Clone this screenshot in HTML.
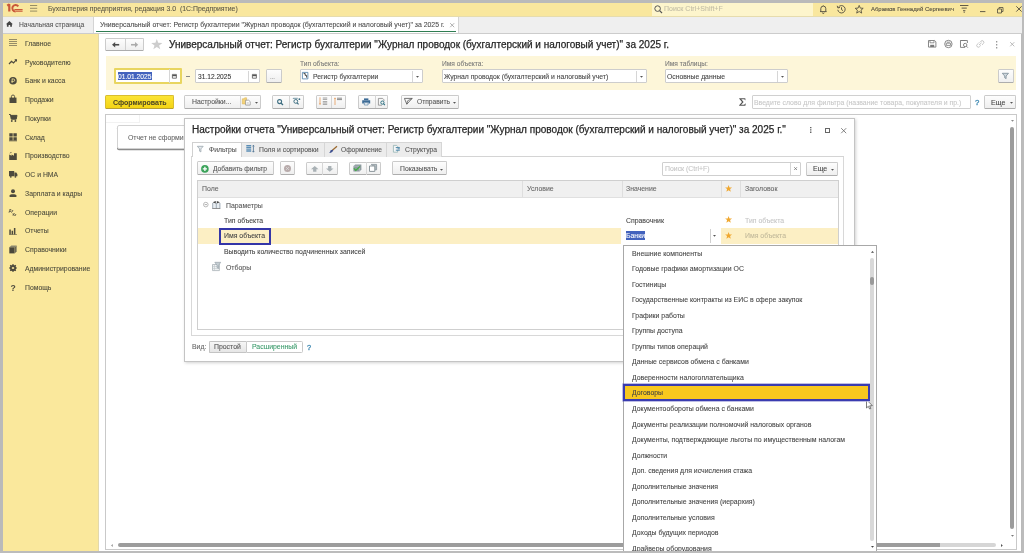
<!DOCTYPE html>
<html><head><meta charset="utf-8">
<style>
*{box-sizing:border-box;margin:0;padding:0}
html,body{-webkit-font-smoothing:antialiased;width:1024px;height:553px;overflow:hidden;background:#bababa;font-family:"Liberation Sans",sans-serif;color:#4a4a4a;position:relative}
.a{position:absolute}
.t{position:absolute;white-space:nowrap;will-change:transform;-webkit-text-stroke:0.08px currentColor}
svg{position:absolute;overflow:visible;will-change:transform}
</style></head><body>

<div class="a" style="left:3.00px;top:2.60px;width:1018.50px;height:13.40px;background:#f9e79e"></div>
<div class="a" style="left:3.00px;top:16.00px;width:1018.50px;height:0.60px;background:#e6dcae"></div>
<div class="a" style="left:3.00px;top:16.60px;width:1018.50px;height:16.40px;background:#efefef"></div>
<div class="a" style="left:3.00px;top:33.00px;width:1018.50px;height:0.80px;background:#cccccc"></div>
<div class="a" style="left:3.00px;top:33.80px;width:95.40px;height:516.80px;background:#fae89c"></div>
<div class="a" style="left:98.40px;top:33.80px;width:0.80px;height:516.80px;background:#e2d8ac"></div>
<div class="a" style="left:99.20px;top:33.80px;width:922.30px;height:516.80px;background:#fff"></div>
<svg style="left:6px;top:3px" width="18" height="11" viewBox="0 0 18 11"><path d="M1.2 2.7 L3.3 1.3 V8.6" stroke="#c9583a" stroke-width="2.2" fill="none" stroke-linejoin="bevel"/>
<path d="M12.3 3.3 A3.3 3.3 0 1 0 9.6 8.5" stroke="#c9583a" stroke-width="2" fill="none"/>
<path d="M8.4 6.5 H16.6 M9.6 8.1 H16.6" stroke="#c9583a" stroke-width="1.2" fill="none"/></svg>
<svg style="left:30px;top:5px" width="8" height="7" viewBox="0 0 8 7"><path d="M0 0.5H7.2M0 3.3H7.2M0 6.1H7.2" stroke="#8a835f" stroke-width="0.9"/></svg>
<div class="t" style="left:48.10px;top:1.80px;font-size:6.9px;line-height:14px;color:#5a5646;">Бухгалтерия предприятия, редакция 3.0&nbsp; (1С:Предприятие)</div>
<div class="a" style="left:651.70px;top:3.00px;width:161.20px;height:13.00px;background:#fdf5cc"></div>
<svg style="left:653.5px;top:5px" width="9" height="9" viewBox="0 0 9 9"><circle cx="3.6" cy="3.6" r="2.8" stroke="#555" stroke-width="1" fill="none"/><path d="M5.6 5.6 L8 8" stroke="#555" stroke-width="1.2"/></svg>
<div class="t" style="left:664.40px;top:2.00px;font-size:7.0px;line-height:14px;color:#c2bda5;">Поиск Ctrl+Shift+F</div>
<svg style="left:818.8px;top:5px" width="9" height="9" viewBox="0 0 9 9"><path d="M1 6.6 H7.6 M1.8 6.6 V3.6 A2.5 2.5 0 0 1 6.8 3.6 V6.6 M3.4 7.6 A0.9 0.9 0 0 0 5.2 7.6 M4.3 0.5 V1" stroke="#4f4b3e" stroke-width="0.9" fill="none"/></svg>
<svg style="left:837.2px;top:4.8px" width="9" height="9" viewBox="0 0 9 9"><path d="M1.4 2.2 A3.7 3.7 0 1 1 0.8 4.8" stroke="#4f4b3e" stroke-width="0.9" fill="none"/><path d="M0.2 0.8 L0.9 3 L3 2.4" stroke="#4f4b3e" stroke-width="0.9" fill="none"/><path d="M4.5 2.3 V4.6 L6 5.6" stroke="#4f4b3e" stroke-width="0.9" fill="none"/></svg>
<svg style="left:855px;top:4.6px" width="9" height="9" viewBox="0 0 9 9"><path d="M4.2 0.4 L5.3 3.1 L8.2 3.3 L6 5.2 L6.7 8.1 L4.2 6.5 L1.7 8.1 L2.4 5.2 L0.2 3.3 L3.1 3.1 Z" stroke="#4f4b3e" stroke-width="0.85" fill="none" stroke-linejoin="round"/></svg>
<div class="t" style="left:870.60px;top:1.70px;font-size:5.95px;line-height:14px;color:#4f4b3e;">Абрамов Геннадий Сергеевич</div>
<svg style="left:960px;top:5.2px" width="9" height="8" viewBox="0 0 9 8"><path d="M0 0.5H8.4M1.6 3.1H6.8M3 5.7H5.4" stroke="#4f4b3e" stroke-width="0.9"/><circle cx="4.2" cy="7.2" r="0.6" fill="#4f4b3e"/></svg>
<svg style="left:979.7px;top:10.5px" width="6" height="2" viewBox="0 0 6 2"><path d="M0 0.6H5.4" stroke="#4f4b3e" stroke-width="0.9"/></svg>
<svg style="left:997px;top:6.5px" width="7" height="7" viewBox="0 0 7 7"><path d="M0.5 2 H4.5 V6 H0.5 Z M2 2 V0.5 H6 V4.5 H4.5" stroke="#4f4b3e" stroke-width="0.8" fill="none"/></svg>
<svg style="left:1015.8px;top:6px" width="7" height="7" viewBox="0 0 7 7"><path d="M0.3 0.3 L5.6 5.6 M5.6 0.3 L0.3 5.6" stroke="#4f4b3e" stroke-width="0.9"/></svg>
<svg style="left:5.9px;top:21px" width="7" height="6" viewBox="0 0 7 6"><path d="M3.4 0 L6.9 3.2 H5.9 V5.7 H4.2 V3.9 H2.6 V5.7 H0.9 V3.2 H-0.1 Z" fill="#444"/></svg>
<div class="t" style="left:19.20px;top:18.10px;font-size:6.75px;line-height:14px;color:#555;">Начальная страница</div>
<div class="a" style="left:93.00px;top:16.60px;width:0.60px;height:16.40px;background:#d4d4d4"></div>
<div class="a" style="left:93.60px;top:16.60px;width:364.40px;height:16.40px;background:#fff"></div>
<div class="a" style="left:458.00px;top:16.60px;width:0.60px;height:16.40px;background:#d4d4d4"></div>
<div class="a" style="left:96.00px;top:31.00px;width:360.00px;height:1.20px;background:#2f7d52"></div>
<div class="t" style="left:99.60px;top:18.10px;font-size:6.9px;line-height:14px;color:#4a4a4a;">Универсальный отчет: Регистр бухгалтерии "Журнал проводок (бухгалтерский и налоговый учет)" за 2025 г.</div>
<svg style="left:449.5px;top:23px" width="4.5" height="4.5" viewBox="0 0 4.5 4.5"><path d="M0.2 0.2 L4.2 4.2 M4.2 0.2 L0.2 4.2" stroke="#9a9a9a" stroke-width="0.8"/></svg>
<div class="t" style="left:24.80px;top:36.90px;font-size:6.85px;line-height:14px;color:#4b4a3c;">Главное</div>
<svg style="left:9px;top:39.199999999999996px" width="8" height="8" viewBox="0 0 8 8"><path d="M0 0.5H8M0 2.5H8M0 4.5H8M0 6.5H8" stroke="#6a6650" stroke-width="0.7"/></svg>
<div class="t" style="left:24.80px;top:55.65px;font-size:6.85px;line-height:14px;color:#4b4a3c;">Руководителю</div>
<svg style="left:9px;top:57.949999999999996px" width="8" height="8" viewBox="0 0 8 8"><path d="M0 6 L2.5 3.3 L4.5 5 L7.3 1.8" stroke="#4d4a3d" stroke-width="1.2" fill="none"/><path d="M5.3 1.2 H8 V3.9 Z" fill="#4d4a3d"/></svg>
<div class="t" style="left:24.80px;top:74.40px;font-size:6.85px;line-height:14px;color:#4b4a3c;">Банк и касса</div>
<svg style="left:9px;top:76.7px" width="8" height="8" viewBox="0 0 8 8"><circle cx="4" cy="3.8" r="3.8" fill="#4d4a3d"/><path d="M3.1 1.6 V6 M3.1 2 H4.5 A1.2 1.2 0 0 1 4.5 4.4 H2.4" stroke="#fae89c" stroke-width="0.8" fill="none"/></svg>
<div class="t" style="left:24.80px;top:93.15px;font-size:6.85px;line-height:14px;color:#4b4a3c;">Продажи</div>
<svg style="left:9px;top:95.45px" width="8" height="8" viewBox="0 0 8 8"><path d="M0.5 2.6 H7.5 V8 H0.5 Z" fill="#4d4a3d"/><path d="M2.4 3 V1.6 A1.6 1.6 0 0 1 5.6 1.6 V3" stroke="#4d4a3d" stroke-width="0.9" fill="none"/></svg>
<div class="t" style="left:24.80px;top:111.90px;font-size:6.85px;line-height:14px;color:#4b4a3c;">Покупки</div>
<svg style="left:9px;top:114.2px" width="8" height="8" viewBox="0 0 8 8"><path d="M0 0.5 H1.4 L2.3 5.2 H7.2 L8 1.4 H1.7" stroke="#4d4a3d" stroke-width="1" fill="#4d4a3d"/><circle cx="2.8" cy="7" r="0.9" fill="#4d4a3d"/><circle cx="6.4" cy="7" r="0.9" fill="#4d4a3d"/></svg>
<div class="t" style="left:24.80px;top:130.65px;font-size:6.85px;line-height:14px;color:#4b4a3c;">Склад</div>
<svg style="left:9px;top:132.95000000000002px" width="8" height="8" viewBox="0 0 8 8"><path d="M0.3 0.3 H3.7 V3.5 H0.3Z M4.4 0.3 H7.8 V3.5 H4.4Z M0.3 4.2 H3.7 V7.2 H0.3Z M4.4 4.2 H7.8 V7.2 H4.4Z M0 7.6 H8 V8.2 H0Z" fill="#4d4a3d"/></svg>
<div class="t" style="left:24.80px;top:149.40px;font-size:6.85px;line-height:14px;color:#4b4a3c;">Производство</div>
<svg style="left:9px;top:151.70000000000002px" width="8" height="8" viewBox="0 0 8 8"><path d="M0.2 8 V2.4 L2.6 3.8 V2.4 L5 3.8 V1.2 H7.8 V8 Z" fill="#4d4a3d"/><path d="M1 1.4 A1 1 0 0 1 2.6 0.6" stroke="#4d4a3d" stroke-width="0.7" fill="none"/></svg>
<div class="t" style="left:24.80px;top:168.15px;font-size:6.85px;line-height:14px;color:#4b4a3c;">ОС и НМА</div>
<svg style="left:9px;top:170.45000000000002px" width="8" height="8" viewBox="0 0 8 8"><path d="M0 1 H5.2 V6.2 H0Z M5.5 2.6 H7.3 L8.4 4.2 V6.2 H5.5Z" fill="#4d4a3d"/><circle cx="1.8" cy="6.8" r="0.9" fill="#4d4a3d"/><circle cx="6.4" cy="6.8" r="0.9" fill="#4d4a3d"/></svg>
<div class="t" style="left:24.80px;top:186.90px;font-size:6.85px;line-height:14px;color:#4b4a3c;">Зарплата и кадры</div>
<svg style="left:9px;top:189.20000000000002px" width="8" height="8" viewBox="0 0 8 8"><circle cx="4" cy="2.2" r="2" fill="#4d4a3d"/><path d="M0.6 8 V6.4 C0.6 4.8 7.4 4.8 7.4 6.4 V8 Z" fill="#4d4a3d"/></svg>
<div class="t" style="left:24.80px;top:205.65px;font-size:6.85px;line-height:14px;color:#4b4a3c;">Операции</div>
<svg style="left:9px;top:207.95000000000002px" width="8" height="8" viewBox="0 0 8 8"><text x="-0.2" y="3.6" font-size="4" font-weight="bold" fill="#4d4a3d" font-family="Liberation Sans">Дт</text><text x="3.4" y="7.9" font-size="4" font-weight="bold" fill="#4d4a3d" font-family="Liberation Sans">Кт</text></svg>
<div class="t" style="left:24.80px;top:224.40px;font-size:6.85px;line-height:14px;color:#4b4a3c;">Отчеты</div>
<svg style="left:9px;top:226.70000000000002px" width="8" height="8" viewBox="0 0 8 8"><path d="M0.3 2.5 H1.8 V7.2 H0.3Z M2.6 3.8 H4.1 V7.2 H2.6Z M4.9 1 H6.4 V7.2 H4.9Z M0 7.4 H8 V8 H0Z" fill="#4d4a3d"/></svg>
<div class="t" style="left:24.80px;top:243.15px;font-size:6.85px;line-height:14px;color:#4b4a3c;">Справочники</div>
<svg style="left:9px;top:245.45000000000002px" width="8" height="8" viewBox="0 0 8 8"><path d="M0.3 2.2 H5.6 V8.4 H0.3Z" fill="#4a473b"/><path d="M0.3 2.2 L2.3 0.4 H7.6 L5.6 2.2Z" fill="#8a866f"/><path d="M5.6 2.2 L7.6 0.4 V6.6 L5.6 8.4Z" fill="#6c6956"/></svg>
<div class="t" style="left:24.80px;top:261.90px;font-size:6.85px;line-height:14px;color:#4b4a3c;">Администрирование</div>
<svg style="left:9px;top:264.2px" width="8" height="8" viewBox="0 0 8 8"><circle cx="4" cy="4" r="2.3" stroke="#4d4a3d" stroke-width="1.6" fill="none"/><path d="M4 0V8M0 4H8M1.2 1.2L6.8 6.8M6.8 1.2L1.2 6.8" stroke="#4d4a3d" stroke-width="1.2"/><circle cx="4" cy="4" r="1.1" fill="#fae89c"/></svg>
<div class="t" style="left:24.80px;top:280.65px;font-size:6.85px;line-height:14px;color:#4b4a3c;">Помощь</div>
<svg style="left:9px;top:282.95px" width="8" height="8" viewBox="0 0 8 8"><text x="1.4" y="7.8" font-size="8.6" font-weight="bold" fill="#4d4a3d" font-family="Liberation Sans">?</text></svg>
<div class="a" style="left:105.40px;top:38.10px;width:39.00px;height:12.50px;background:linear-gradient(#fdfdfd,#efefef);border:1px solid #cbcbcb;border-bottom-color:#adadad;border-radius:1.5px;"></div>
<div class="a" style="left:125.00px;top:38.60px;width:0.80px;height:11.60px;background:#d0d0d0"></div>
<svg style="left:111.9px;top:41.8px" width="7.5" height="5.5" viewBox="0 0 7.5 5.5"><path d="M0 2.75 L3.2 0 V5.5Z" fill="#4a4a4a"/><path d="M2.5 2.75 H7.2" stroke="#4a4a4a" stroke-width="1.6"/></svg>
<svg style="left:131px;top:41.8px" width="7.5" height="5.5" viewBox="0 0 7.5 5.5"><path d="M7.2 2.75 L4 0 V5.5Z" fill="#ababab"/><path d="M0 2.75 H4.7" stroke="#ababab" stroke-width="1.6"/></svg>
<svg style="left:151.2px;top:39.4px" width="11.6" height="10.5" viewBox="0 0 11.6 10.5"><path d="M5.8 0 L7.2 3.8 L11.4 3.9 L8.1 6.4 L9.3 10.3 L5.8 8 L2.3 10.3 L3.5 6.4 L0.2 3.9 L4.4 3.8Z" fill="#cdcdcd"/></svg>
<div class="t" style="left:168.75px;top:38.00px;font-size:10.0px;line-height:14px;color:#262626;-webkit-text-stroke:0.25px #262626">Универсальный отчет: Регистр бухгалтерии "Журнал проводок (бухгалтерский и налоговый учет)" за 2025 г.</div>
<svg style="left:928px;top:40.3px" width="8.4" height="7.6" viewBox="0 0 8.4 7.6"><path d="M0.5 0.5 H6.6 L7.9 1.8 V7.1 H0.5Z" stroke="#7a7a7a" stroke-width="0.9" fill="none"/><path d="M2 0.6 V2.8 H6 V0.6" stroke="#7a7a7a" stroke-width="0.8" fill="none"/><path d="M2.2 4.8 H6.2 V7H2.2Z" fill="#7a7a7a"/></svg>
<svg style="left:943.9px;top:40px" width="8.8" height="8" viewBox="0 0 8.8 8"><circle cx="4.4" cy="4" r="3.7" stroke="#7a7a7a" stroke-width="0.9" fill="none"/><path d="M2.3 3.2 H6.5 V5.4 H2.3Z M3 2.2 H5.8" stroke="#7a7a7a" stroke-width="0.8" fill="none"/></svg>
<svg style="left:960px;top:40px" width="8.2" height="8" viewBox="0 0 8.2 8"><path d="M5.5 0.5 H0.5 V7.4 H5" stroke="#7a7a7a" stroke-width="0.9" fill="none"/><path d="M0.5 0.5 H7.4 V3" stroke="#7a7a7a" stroke-width="0.9" fill="none"/><circle cx="5.2" cy="5" r="1.7" stroke="#7a7a7a" stroke-width="0.9" fill="none"/><path d="M6.4 6.2 L7.8 7.6" stroke="#7a7a7a" stroke-width="1"/></svg>
<svg style="left:976.2px;top:40.2px" width="8.8" height="8" viewBox="0 0 8.8 8"><path d="M3.6 2.6 L5 1.2 A1.6 1.6 0 0 1 7.4 3.5 L6 4.9 M4.8 5.4 L3.5 6.7 A1.6 1.6 0 0 1 1.2 4.4 L2.6 3 M3 5 L5.6 2.8" stroke="#bdbdbd" stroke-width="0.9" fill="none"/></svg>
<svg style="left:996px;top:40.5px" width="1.5" height="7.5" viewBox="0 0 1.5 7.5"><path d="M0.7 0V1.4M0.7 3V4.4M0.7 6V7.4" stroke="#888" stroke-width="1.1"/></svg>
<svg style="left:1010.3px;top:42px" width="4.5" height="4.5" viewBox="0 0 4.5 4.5"><path d="M0.2 0.2L4.3 4.3M4.3 0.2L0.2 4.3" stroke="#aaa" stroke-width="0.8"/></svg>
<div class="a" style="left:105.50px;top:56.00px;width:910.50px;height:33.80px;background:#fdf6d9"></div>
<div class="a" style="left:113.70px;top:67.80px;width:68.30px;height:16.60px;background:#fff;border:2px solid #e8d560;border-radius:1px"></div>
<div class="a" style="left:117.60px;top:72.00px;width:34.70px;height:7.60px;background:#4262bd"></div>
<div class="t" style="left:117.80px;top:69.70px;font-size:6.7px;line-height:14px;color:#fff;">01.01.2025</div>
<div class="a" style="left:169.30px;top:69.40px;width:0.80px;height:13.40px;background:#d6d6d6"></div>
<svg style="left:172.2px;top:74px" width="5" height="4.6" viewBox="0 0 5 4.6"><path d="M0.4 0.4H4.4V4.2H0.4Z" stroke="#555" stroke-width="0.8" fill="none"/><path d="M0.4 1.6H4.4" stroke="#555" stroke-width="1.2"/></svg>
<div class="a" style="left:186.00px;top:76.00px;width:4.00px;height:1.00px;background:#888"></div>
<div class="a" style="left:195.30px;top:69.20px;width:65.20px;height:14.00px;background:#fff;border:1px solid #cdcdcd;border-radius:1px"></div>
<div class="t" style="left:197.70px;top:69.70px;font-size:6.63px;line-height:14px;color:#333;">31.12.2025</div>
<div class="a" style="left:248.40px;top:70.50px;width:0.80px;height:11.30px;background:#d6d6d6"></div>
<svg style="left:252px;top:74px" width="5" height="4.6" viewBox="0 0 5 4.6"><path d="M0.4 0.4H4.4V4.2H0.4Z" stroke="#555" stroke-width="0.8" fill="none"/><path d="M0.4 1.6H4.4" stroke="#555" stroke-width="1.2"/></svg>
<div class="a" style="left:266.00px;top:69.20px;width:15.60px;height:14.00px;background:linear-gradient(#fdfdfd,#efefef);border:1px solid #cbcbcb;border-bottom-color:#adadad;border-radius:1.5px;"></div>
<div class="t" style="left:269.80px;top:69.70px;font-size:6.0px;line-height:14px;color:#888;">...</div>
<div class="t" style="left:300.30px;top:56.80px;font-size:6.64px;line-height:14px;color:#777;">Тип объекта:</div>
<div class="a" style="left:300.30px;top:69.20px;width:123.20px;height:14.00px;background:#fff;border:1px solid #cdcdcd;border-radius:1px"></div>
<svg style="left:302.3px;top:72.3px" width="6.3" height="7.3" viewBox="0 0 6.3 7.3"><path d="M0.4 0.4H5.9V6.9H0.4Z" stroke="#4b7ea8" stroke-width="0.8" fill="#fff"/><path d="M1.6 1.6 H3.2 V3.4 H4.6 V5.6" stroke="#333" stroke-width="0.9" fill="none"/></svg>
<div class="t" style="left:312.60px;top:69.80px;font-size:6.81px;line-height:14px;color:#444;">Регистр бухгалтерии</div>
<div class="a" style="left:412.40px;top:70.50px;width:0.80px;height:11.30px;background:#d6d6d6"></div>
<svg style="left:416.3px;top:75.5px" width="3" height="2" viewBox="0 0 3 2"><path d="M0 0H3L1.5 1.8Z" fill="#555"/></svg>
<div class="t" style="left:442.30px;top:56.80px;font-size:6.64px;line-height:14px;color:#777;">Имя объекта:</div>
<div class="a" style="left:442.20px;top:69.20px;width:204.60px;height:14.00px;background:#fff;border:1px solid #cdcdcd;border-radius:1px"></div>
<div class="t" style="left:444.30px;top:69.80px;font-size:6.81px;line-height:14px;color:#444;">Журнал проводок (бухгалтерский и налоговый учет)</div>
<div class="a" style="left:635.50px;top:70.50px;width:0.80px;height:11.30px;background:#d6d6d6"></div>
<svg style="left:639.5px;top:75.5px" width="3" height="2" viewBox="0 0 3 2"><path d="M0 0H3L1.5 1.8Z" fill="#555"/></svg>
<div class="t" style="left:664.50px;top:56.80px;font-size:6.64px;line-height:14px;color:#777;">Имя таблицы:</div>
<div class="a" style="left:664.50px;top:69.20px;width:123.80px;height:14.00px;background:#fff;border:1px solid #cdcdcd;border-radius:1px"></div>
<div class="t" style="left:666.60px;top:69.80px;font-size:6.81px;line-height:14px;color:#444;">Основные данные</div>
<div class="a" style="left:777.00px;top:70.50px;width:0.80px;height:11.30px;background:#d6d6d6"></div>
<svg style="left:781px;top:75.5px" width="3" height="2" viewBox="0 0 3 2"><path d="M0 0H3L1.5 1.8Z" fill="#555"/></svg>
<div class="a" style="left:998.00px;top:69.20px;width:15.50px;height:14.00px;background:linear-gradient(#fdfdfd,#efefef);border:1px solid #cbcbcb;border-bottom-color:#adadad;border-radius:1.5px;"></div>
<svg style="left:1002.3px;top:72.8px" width="7" height="6" viewBox="0 0 7 6"><path d="M0.3 0.3 H6.5 L4.1 3 V5.6 L2.7 4.8 V3 Z" stroke="#7a8a95" stroke-width="0.8" fill="#cfd8de"/></svg>
<div class="a" style="left:105.40px;top:94.70px;width:68.30px;height:14.05px;background:linear-gradient(#fbe435,#f4d414);border:1px solid #d8bd30;border-bottom-color:#b9a030;border-radius:1.5px"></div>
<div class="t" style="left:112.70px;top:95.90px;font-size:7.05px;line-height:14px;color:#4a4424;font-weight:bold;-webkit-text-stroke:0">Сформировать</div>
<div class="a" style="left:184.40px;top:94.70px;width:76.60px;height:13.90px;background:linear-gradient(#fdfdfd,#efefef);border:1px solid #cbcbcb;border-bottom-color:#adadad;border-radius:1.5px;"></div>
<div class="t" style="left:191.80px;top:95.10px;font-size:6.88px;line-height:14px;color:#555;">Настройки...</div>
<div class="a" style="left:239.50px;top:95.30px;width:0.80px;height:12.50px;background:#d4d4d4"></div>
<svg style="left:242.2px;top:97.4px" width="8.8" height="8.4" viewBox="0 0 8.8 8.4"><path d="M0.3 1.8 H1.8 L2.6 0.8 H4.6 V7 H0.3Z" fill="#f3d27a" stroke="#d8b04a" stroke-width="0.5"/><path d="M3.6 3.2 H6.6 L8.2 4.6 V8.1 H3.6Z" fill="#fff" stroke="#8a8a8a" stroke-width="0.7"/><path d="M4.8 5.6H6.8M4.8 6.8H6.8" stroke="#aaa" stroke-width="0.5"/></svg>
<svg style="left:254.8px;top:101.5px" width="3" height="2" viewBox="0 0 3 2"><path d="M0 0H3L1.5 1.8Z" fill="#555"/></svg>
<div class="a" style="left:272.30px;top:94.70px;width:31.30px;height:13.90px;background:linear-gradient(#fdfdfd,#efefef);border:1px solid #cbcbcb;border-bottom-color:#adadad;border-radius:1.5px;"></div>
<div class="a" style="left:288.50px;top:95.30px;width:0.80px;height:12.50px;background:#d4d4d4"></div>
<svg style="left:277px;top:98.6px" width="6.6" height="6.2" viewBox="0 0 6.6 6.2"><circle cx="2.6" cy="2.6" r="2" stroke="#3f6f82" stroke-width="1.1" fill="none"/><path d="M4 4 L6 6" stroke="#3f6f82" stroke-width="1.3"/></svg>
<svg style="left:293px;top:98.3px" width="7.2" height="6.8" viewBox="0 0 7.2 6.8"><path d="M0.3 1 V0.3 H4.8" stroke="#3f6f82" stroke-width="0.7" fill="none"/><circle cx="2.8" cy="3.4" r="1.9" stroke="#3f6f82" stroke-width="1" fill="none"/><path d="M4.1 4.8 L5.6 6.4" stroke="#3f6f82" stroke-width="1.2"/><circle cx="6.4" cy="1.2" r="0.9" fill="#3f6f82"/></svg>
<div class="a" style="left:315.50px;top:94.70px;width:30.80px;height:13.90px;background:linear-gradient(#fdfdfd,#efefef);border:1px solid #cbcbcb;border-bottom-color:#adadad;border-radius:1.5px;"></div>
<div class="a" style="left:331.25px;top:95.30px;width:0.80px;height:12.50px;background:#d4d4d4"></div>
<svg style="left:318.6px;top:97.2px" width="9" height="8.4" viewBox="0 0 9 8.4"><path d="M1 0.3 V7.5" stroke="#e6a46a" stroke-width="0.9"/><path d="M0 6.3 L1 8 L2 6.3Z" fill="#e6a46a"/><path d="M3.8 1H8.2M3.8 2.4H8.2M3.8 4.6H8.2M3.8 6H8.2M3.8 7.4H8.2" stroke="#9a9a9a" stroke-width="0.9"/></svg>
<svg style="left:334.2px;top:97.2px" width="9" height="8.4" viewBox="0 0 9 8.4"><path d="M1 1.2 V8" stroke="#e6a46a" stroke-width="0.9"/><path d="M0 2 L1 0.3 L2 2Z" fill="#e6a46a"/><path d="M3 1.2H8M3 2.6H8" stroke="#8a8a8a" stroke-width="1"/></svg>
<div class="a" style="left:358.40px;top:94.70px;width:30.10px;height:13.90px;background:linear-gradient(#fdfdfd,#efefef);border:1px solid #cbcbcb;border-bottom-color:#adadad;border-radius:1.5px;"></div>
<div class="a" style="left:374.50px;top:95.30px;width:0.80px;height:12.50px;background:#d4d4d4"></div>
<svg style="left:362px;top:98px" width="8.4" height="7.2" viewBox="0 0 8.4 7.2"><path d="M2 0.4 H6.4 V2 H2Z" fill="#3c6b96"/><path d="M0.2 2.3 H8.2 V5.6 H6.6 V4.4 H1.8 V5.6 H0.2Z" fill="#3c6b96"/><path d="M2.3 4.8 H6.1 V7 H2.3Z" fill="#fff" stroke="#3c6b96" stroke-width="0.6"/></svg>
<svg style="left:378px;top:97.8px" width="7.4" height="7.6" viewBox="0 0 7.4 7.6"><path d="M4.6 0.4 H0.4 V7.2 H4" stroke="#777" stroke-width="0.7" fill="#f6f6f6"/><path d="M4.6 0.4 L6 1.8 V3" stroke="#777" stroke-width="0.7" fill="none"/><circle cx="4.4" cy="4.6" r="1.6" stroke="#2d6e80" stroke-width="1" fill="none"/><path d="M5.5 5.7 L6.9 7.1" stroke="#2d6e80" stroke-width="1.1"/></svg>
<div class="a" style="left:400.50px;top:94.70px;width:58.90px;height:13.90px;background:linear-gradient(#fdfdfd,#efefef);border:1px solid #cbcbcb;border-bottom-color:#adadad;border-radius:1.5px;"></div>
<svg style="left:404.2px;top:98.2px" width="8.6" height="6.6" viewBox="0 0 8.6 6.6"><path d="M0.4 0.4 H8.2 L2.8 6.2Z" stroke="#555" stroke-width="0.8" fill="none" stroke-linejoin="round"/><path d="M2.8 6.2 L3.6 2.8 L8.2 0.4" stroke="#555" stroke-width="0.7" fill="none"/></svg>
<div class="t" style="left:416.90px;top:95.20px;font-size:6.65px;line-height:14px;color:#555;">Отправить</div>
<svg style="left:452.8px;top:101.5px" width="3" height="2" viewBox="0 0 3 2"><path d="M0 0H3L1.5 1.8Z" fill="#555"/></svg>
<svg style="left:738.6px;top:98.1px" width="7" height="7.8" viewBox="0 0 7 7.8"><path d="M0.2 0.2 H6.3 L6.5 2.2 H6 C5.8 1.4 5.4 1.2 4.6 1.2 H2.3 L4.6 3.9 L2.1 6.7 H4.8 C5.6 6.7 6 6.4 6.3 5.6 H6.8 L6.4 7.7 H0.1 V7.2 L3 3.9 L0.2 0.7Z" fill="#555"/></svg>
<div class="a" style="left:752.00px;top:95.40px;width:218.50px;height:13.20px;background:#fff;border:1px solid #d0d0d0;border-radius:1px"></div>
<div class="t" style="left:753.80px;top:95.50px;font-size:6.9px;line-height:14px;color:#c6c6c6;">Введите слово для фильтра (название товара, покупателя и пр.)</div>
<div class="t" style="left:975.30px;top:95.90px;font-size:7.8px;line-height:14px;color:#3a86b0;-webkit-text-stroke:0.3px #3a86b0">?</div>
<div class="a" style="left:984.00px;top:95.30px;width:32.40px;height:13.30px;background:linear-gradient(#fdfdfd,#efefef);border:1px solid #cbcbcb;border-bottom-color:#adadad;border-radius:1.5px;"></div>
<div class="t" style="left:991.00px;top:96.10px;font-size:7.1px;line-height:14px;color:#444;">Еще</div>
<svg style="left:1009.8px;top:101.5px" width="3" height="2" viewBox="0 0 3 2"><path d="M0 0H3L1.5 1.8Z" fill="#555"/></svg>
<div class="a" style="left:105.20px;top:114.30px;width:911.80px;height:435.70px;background:#fff;border:1px solid #c9c9c9"></div>
<div class="a" style="left:106.20px;top:115.30px;width:34.20px;height:8.00px;border-right:1px solid #f2f2f2;border-bottom:1px solid #f2f2f2"></div>
<div class="a" style="left:116.70px;top:125.20px;width:143.30px;height:24.00px;background:#fff;border:1px solid #d2d2d2;border-radius:2px;box-shadow:0 1.2px 0 #8c8c8c"></div>
<div class="t" style="left:127.70px;top:131.10px;font-size:6.9px;line-height:14px;color:#666;">Отчет не сформирован</div>
<svg style="left:1010.8px;top:119.7px" width="3" height="2" viewBox="0 0 3 2"><path d="M0 0H3L1.5 1.8Z" fill="#888"/></svg>
<div class="a" style="left:1010.20px;top:126.70px;width:4.00px;height:402.00px;background:#9c9c9c;border-radius:2px"></div>
<svg style="left:1010.8px;top:534.7px" width="3" height="2" viewBox="0 0 3 2"><path d="M0 0H3L1.5 1.8Z" fill="#777"/></svg>
<svg style="left:110.6px;top:543.8px" width="2" height="3" viewBox="0 0 2 3"><path d="M1.8 0V3L0 1.5Z" fill="#999"/></svg>
<div class="a" style="left:118.10px;top:543.30px;width:827.90px;height:4.10px;background:#9c9c9c;border-radius:2px"></div>
<div class="a" style="left:940.00px;top:543.30px;width:56.00px;height:4.10px;background:#d6d6d6;border-radius:0 2px 2px 0"></div>
<svg style="left:1001.3px;top:543.8px" width="2" height="3" viewBox="0 0 2 3"><path d="M0 0V3L1.8 1.5Z" fill="#555"/></svg>
<div class="a" style="left:184.30px;top:118.10px;width:670.40px;height:243.50px;box-shadow:1px 1px 3px rgba(0,0,0,0.18)"></div>
<div class="a" style="left:184.30px;top:118.10px;width:670.40px;height:243.50px;background:#fff;border:1px solid #c4c4c4"></div>
<div class="t" style="left:192.10px;top:123.40px;font-size:10.04px;line-height:14px;color:#262626;-webkit-text-stroke:0.25px #262626">Настройки отчета "Универсальный отчет: Регистр бухгалтерии "Журнал проводок (бухгалтерский и налоговый учет)" за 2025 г."</div>
<svg style="left:810px;top:127.4px" width="1.5" height="6" viewBox="0 0 1.5 6"><path d="M0.75 0V1.3M0.75 2.3V3.6M0.75 4.6V5.9" stroke="#555" stroke-width="1.3"/></svg>
<div class="a" style="left:825.00px;top:128.30px;width:5.40px;height:4.50px;border:0.9px solid #666"></div>
<svg style="left:841px;top:127.8px" width="5.4" height="5.4" viewBox="0 0 5.4 5.4"><path d="M0.2 0.2L5.2 5.2M5.2 0.2L0.2 5.2" stroke="#666" stroke-width="0.8"/></svg>
<div class="a" style="left:191.30px;top:156.40px;width:652.90px;height:179.80px;border:1px solid #d8d8d8;border-top-color:#d0d0d0"></div>
<div class="a" style="left:241.40px;top:142.40px;width:83.20px;height:14.20px;background:#ececec;border:1px solid #d6d6d6;border-bottom:none"></div>
<div class="a" style="left:324.60px;top:142.40px;width:62.70px;height:14.20px;background:#ececec;border:1px solid #d6d6d6;border-bottom:none;border-left:none"></div>
<div class="a" style="left:387.30px;top:142.40px;width:55.20px;height:14.20px;background:#ececec;border:1px solid #d6d6d6;border-bottom:none;border-left:none"></div>
<div class="a" style="left:191.60px;top:142.40px;width:50.20px;height:15.00px;background:#fff;border:1px solid #d0d0d0;border-bottom:none"></div>
<svg style="left:197.3px;top:146.3px" width="6.5" height="6.2" viewBox="0 0 6.5 6.2"><path d="M0.3 0.3 H6.2 L3.9 2.9 V5.9 L2.6 5.2 V2.9Z" stroke="#9aa6ad" stroke-width="0.8" fill="#e6ebee"/></svg>
<div class="t" style="left:209.00px;top:143.00px;font-size:6.8px;line-height:14px;color:#555;">Фильтры</div>
<svg style="left:246.3px;top:145.3px" width="8.8" height="7.4" viewBox="0 0 8.8 7.4"><path d="M0.3 0.6H5.2M0.3 2.4H5.2M0.3 4.2H5.2M0.3 6H5.2" stroke="#5b8db5" stroke-width="1.3"/><path d="M7.4 0.3V7.1" stroke="#4a6f8f" stroke-width="0.8"/><path d="M6.5 1.4L7.4 0.2L8.3 1.4M6.5 6L7.4 7.2L8.3 6" stroke="#4a6f8f" stroke-width="0.7" fill="none"/></svg>
<div class="t" style="left:259.00px;top:142.80px;font-size:6.8px;line-height:14px;color:#555;">Поля и сортировки</div>
<svg style="left:328.9px;top:145.6px" width="8.2" height="7" viewBox="0 0 8.2 7"><path d="M8 0.2 L3.4 4.2" stroke="#9c6a30" stroke-width="1.3"/><path d="M3.6 3.8 C2.2 3.6 1.2 4.6 1.2 5.4 C1 6.2 0.4 6.6 0 6.9 C1.6 7.1 3.6 6.6 4.2 4.6Z" fill="#3d4f8f"/></svg>
<div class="t" style="left:341.30px;top:142.80px;font-size:6.6px;line-height:14px;color:#555;">Оформление</div>
<svg style="left:393px;top:145px" width="7" height="7.6" viewBox="0 0 7 7.6"><path d="M0.4 0.4 H3.6 L4.6 1.4 V3 M0.4 0.4 V7.2 H4.6 V5" stroke="#8aa" stroke-width="0.7" fill="#f4f7f8"/><path d="M2.8 2.6 H6.8 M4.6 3.8 H6.8 M2.8 5.2 H6.8" stroke="#4a86a8" stroke-width="1"/></svg>
<div class="t" style="left:404.80px;top:142.80px;font-size:6.75px;line-height:14px;color:#555;">Структура</div>
<div class="a" style="left:442.50px;top:156.40px;width:401.70px;height:0.80px;background:#d4d4d4"></div>
<div class="a" style="left:197.30px;top:161.40px;width:77.20px;height:13.90px;background:linear-gradient(#fdfdfd,#efefef);border:1px solid #cbcbcb;border-bottom-color:#adadad;border-radius:1.5px;"></div>
<svg style="left:201.3px;top:164.8px" width="7.8" height="7.8" viewBox="0 0 7.8 7.8"><circle cx="3.9" cy="3.9" r="3.8" fill="#3ba35a"/><path d="M3.9 1.8V6M1.8 3.9H6" stroke="#fff" stroke-width="1.3"/></svg>
<div class="t" style="left:213.10px;top:162.10px;font-size:6.66px;line-height:14px;color:#555;">Добавить фильтр</div>
<div class="a" style="left:279.70px;top:161.40px;width:15.80px;height:13.90px;background:linear-gradient(#fdfdfd,#efefef);border:1px solid #cbcbcb;border-bottom-color:#adadad;border-radius:1.5px;"></div>
<svg style="left:284.1px;top:164.75px" width="7" height="7" viewBox="0 0 7 7"><circle cx="3.5" cy="3.5" r="3.5" fill="#b8abab"/><path d="M2.1 2.1L4.9 4.9M4.9 2.1L2.1 4.9" stroke="#ddd" stroke-width="0.8"/></svg>
<div class="a" style="left:306.30px;top:161.50px;width:31.70px;height:13.60px;background:linear-gradient(#fdfdfd,#efefef);border:1px solid #cbcbcb;border-bottom-color:#adadad;border-radius:1.5px;"></div>
<div class="a" style="left:322.40px;top:162.00px;width:0.80px;height:12.60px;background:#d6d6d6"></div>
<svg style="left:310.5px;top:165.5px" width="7.5" height="5.8" viewBox="0 0 7.5 5.8"><path d="M3.75 0 L7.5 3.2 H5.4 V5.8 H2.1 V3.2 H0Z" fill="#a9b1b5"/></svg>
<svg style="left:326px;top:165.5px" width="7.5" height="5.8" viewBox="0 0 7.5 5.8"><path d="M3.75 5.8 L7.5 2.6 H5.4 V0 H2.1 V2.6 H0Z" fill="#a9b1b5"/></svg>
<div class="a" style="left:349.40px;top:161.50px;width:31.30px;height:13.60px;background:linear-gradient(#fdfdfd,#efefef);border:1px solid #cbcbcb;border-bottom-color:#adadad;border-radius:1.5px;"></div>
<div class="a" style="left:365.50px;top:162.00px;width:0.80px;height:12.60px;background:#d6d6d6"></div>
<svg style="left:353.2px;top:164.2px" width="8.8" height="7.8" viewBox="0 0 8.8 7.8"><path d="M0.4 2.2 L2.2 0.4 H8.4 V5.6 L6.6 7.4 H0.4Z" fill="#8e9aa0"/><path d="M0.4 2.2H6.6V7.4" stroke="#c8d0d4" stroke-width="0.5" fill="none"/><path d="M0.8 4.4 L2.8 6.4 L7 2.4" stroke="#3fae3f" stroke-width="1.3" fill="none"/></svg>
<svg style="left:369px;top:164.2px" width="8" height="7.8" viewBox="0 0 8 7.8"><path d="M2 0.4 H7.6 V5.8 H5.8" stroke="#8e9aa0" stroke-width="0.9" fill="#b5bec2"/><path d="M0.5 2 H5.8 V7.4 H0.5Z" stroke="#7e8a90" stroke-width="0.9" fill="#fff"/></svg>
<div class="a" style="left:392.40px;top:161.40px;width:54.20px;height:14.00px;background:linear-gradient(#fdfdfd,#efefef);border:1px solid #cbcbcb;border-bottom-color:#adadad;border-radius:1.5px;"></div>
<div class="t" style="left:399.80px;top:162.00px;font-size:6.8px;line-height:14px;color:#555;">Показывать</div>
<svg style="left:440px;top:168.5px" width="3" height="2" viewBox="0 0 3 2"><path d="M0 0H3L1.5 1.8Z" fill="#555"/></svg>
<div class="a" style="left:662.30px;top:162.30px;width:138.40px;height:13.30px;background:#fff;border:1px solid #cfcfcf;border-radius:1px"></div>
<div class="t" style="left:665.00px;top:162.30px;font-size:6.9px;line-height:14px;color:#c4c4c4;">Поиск (Ctrl+F)</div>
<div class="a" style="left:789.50px;top:163.20px;width:0.80px;height:11.60px;background:#d6d6d6"></div>
<svg style="left:793.6px;top:167.4px" width="3.2" height="3.2" viewBox="0 0 3.2 3.2"><path d="M0.2 0.2L3 3M3 0.2L0.2 3" stroke="#666" stroke-width="0.7"/></svg>
<div class="a" style="left:806.30px;top:162.20px;width:32.00px;height:13.40px;background:linear-gradient(#fdfdfd,#efefef);border:1px solid #cbcbcb;border-bottom-color:#adadad;border-radius:1.5px;"></div>
<div class="t" style="left:812.60px;top:162.40px;font-size:7.0px;line-height:14px;color:#444;">Еще</div>
<svg style="left:830.6px;top:168.6px" width="3" height="2" viewBox="0 0 3 2"><path d="M0 0H3L1.5 1.8Z" fill="#555"/></svg>
<div class="a" style="left:197.30px;top:180.20px;width:641.90px;height:150.00px;background:#fff;border:1px solid #cfcfcf"></div>
<div class="a" style="left:198.20px;top:181.20px;width:640.00px;height:17.00px;background:#f0f0f0;border-bottom:1px solid #e0e0e0"></div>
<div class="a" style="left:522.00px;top:181.30px;width:0.80px;height:15.90px;background:#dedede"></div>
<div class="a" style="left:621.50px;top:181.30px;width:0.80px;height:15.90px;background:#dedede"></div>
<div class="a" style="left:720.75px;top:181.30px;width:0.80px;height:15.90px;background:#dedede"></div>
<div class="a" style="left:739.60px;top:181.30px;width:0.80px;height:15.90px;background:#dedede"></div>
<div class="t" style="left:201.80px;top:182.00px;font-size:6.9px;line-height:14px;color:#666;">Поле</div>
<div class="t" style="left:527.30px;top:182.00px;font-size:6.9px;line-height:14px;color:#666;">Условие</div>
<div class="t" style="left:626.00px;top:182.00px;font-size:6.9px;line-height:14px;color:#666;">Значение</div>
<div class="t" style="left:744.75px;top:182.00px;font-size:6.9px;line-height:14px;color:#666;">Заголовок</div>
<svg style="left:724.9px;top:185.2px" width="7.2" height="7" viewBox="0 0 7.2 7"><path d="M3.6 0 L4.5 2.4 L7.1 2.5 L5.1 4.1 L5.8 6.8 L3.6 5.3 L1.4 6.8 L2.1 4.1 L0.1 2.5 L2.7 2.4Z" fill="#f0a830"/></svg>
<div class="a" style="left:198.10px;top:228.00px;width:423.40px;height:16.00px;background:#fcefc4"></div>
<div class="a" style="left:720.75px;top:228.00px;width:116.95px;height:16.00px;background:#fcefc4"></div>
<svg style="left:203px;top:201.8px" width="5.6" height="5.6" viewBox="0 0 5.6 5.6"><circle cx="2.8" cy="2.6" r="2.3" stroke="#a8a8a8" stroke-width="0.8" fill="#fff"/><path d="M1.6 2.6H4" stroke="#999" stroke-width="0.8"/></svg>
<svg style="left:212.2px;top:201.2px" width="8.6" height="8" viewBox="0 0 8.6 8"><path d="M0.4 2 H8.2 V7.6 H0.4Z" fill="#e9eef2"/><path d="M0.7 2 V7.5 M4.3 2 V7.5 M7.9 2 V7.5" stroke="#8d9ba6" stroke-width="0.8"/><path d="M0.3 7.5 H8.3" stroke="#777" stroke-width="0.8"/><path d="M0.6 1.3 L3.8 0 V2.6Z M8 1.3 L4.8 0 V2.6Z" fill="#444"/></svg>
<div class="t" style="left:226.40px;top:198.70px;font-size:6.9px;line-height:14px;color:#555;">Параметры</div>
<div class="t" style="left:223.80px;top:213.90px;font-size:6.9px;line-height:14px;color:#444;">Тип объекта</div>
<div class="t" style="left:223.80px;top:229.20px;font-size:6.9px;line-height:14px;color:#444;">Имя объекта</div>
<div class="a" style="left:219.20px;top:227.60px;width:52.30px;height:17.00px;border:2.2px solid #3436a8"></div>
<div class="t" style="left:223.80px;top:244.90px;font-size:6.9px;line-height:14px;color:#444;">Выводить количество подчиненных записей</div>
<svg style="left:212px;top:261.8px" width="9" height="9" viewBox="0 0 9 9"><path d="M0.5 2.5 H7.4 V8.6 H0.5Z" stroke="#a9b2b8" stroke-width="0.8" fill="#f3f5f6"/><path d="M2.4 2.5V8.6M0.5 4.6H7.4M0.5 6.6H7.4" stroke="#b9c1c6" stroke-width="0.6"/><path d="M2.8 0.3 H8.7 L6.6 3.4 V6.4 L5 5.6 V3.4Z" stroke="#8e9aa2" stroke-width="0.6" fill="#c5ced3"/></svg>
<div class="t" style="left:226.10px;top:261.00px;font-size:6.9px;line-height:14px;color:#555;">Отборы</div>
<div class="t" style="left:626.00px;top:213.90px;font-size:6.9px;line-height:14px;color:#444;">Справочник</div>
<svg style="left:724.9px;top:216.3px" width="7.2" height="7" viewBox="0 0 7.2 7"><path d="M3.6 0 L4.5 2.4 L7.1 2.5 L5.1 4.1 L5.8 6.8 L3.6 5.3 L1.4 6.8 L2.1 4.1 L0.1 2.5 L2.7 2.4Z" fill="#f0a830"/></svg>
<div class="t" style="left:744.75px;top:213.90px;font-size:6.9px;line-height:14px;color:#c4c4c4;">Тип объекта</div>
<div class="a" style="left:621.50px;top:228.00px;width:99.25px;height:16.00px;background:#fff"></div>
<div class="a" style="left:625.60px;top:231.40px;width:19.40px;height:8.20px;background:#4262bd"></div>
<div class="t" style="left:625.80px;top:229.20px;font-size:6.9px;line-height:14px;color:#fff;">Банки</div>
<div class="a" style="left:709.50px;top:228.60px;width:0.80px;height:14.80px;background:#d0d0d0"></div>
<svg style="left:713.2px;top:235.4px" width="3" height="2" viewBox="0 0 3 2"><path d="M0 0H3L1.5 1.8Z" fill="#555"/></svg>
<svg style="left:724.9px;top:231.7px" width="7.2" height="7" viewBox="0 0 7.2 7"><path d="M3.6 0 L4.5 2.4 L7.1 2.5 L5.1 4.1 L5.8 6.8 L3.6 5.3 L1.4 6.8 L2.1 4.1 L0.1 2.5 L2.7 2.4Z" fill="#f0a830"/></svg>
<div class="t" style="left:744.75px;top:229.20px;font-size:6.9px;line-height:14px;color:#c0b89a;">Имя объекта</div>
<div class="t" style="left:191.70px;top:340.40px;font-size:6.9px;line-height:14px;color:#666;">Вид:</div>
<div class="a" style="left:209.20px;top:340.60px;width:36.60px;height:12.80px;background:linear-gradient(#f6f6f6,#e6e6e6);border:1px solid #c4c4c4;border-right:none;border-radius:1.5px 0 0 1.5px"></div>
<div class="a" style="left:245.60px;top:340.60px;width:57.80px;height:12.80px;background:#fff;border:1px solid #c8c8c8;border-radius:0 1.5px 1.5px 0"></div>
<div class="t" style="left:214.30px;top:340.40px;font-size:6.9px;line-height:14px;color:#555;">Простой</div>
<div class="t" style="left:251.70px;top:340.40px;font-size:6.9px;line-height:14px;color:#3a9a6a;">Расширенный</div>
<div class="t" style="left:306.60px;top:340.90px;font-size:7.4px;line-height:14px;color:#3a86b0;-webkit-text-stroke:0.3px #3a86b0">?</div>
<div class="a" style="left:622.60px;top:244.60px;width:254.40px;height:315.40px;background:#fff;border:1px solid #a8a8a8"></div>
<div class="a" style="left:623.30px;top:384.10px;width:247.10px;height:17.30px;background:#f8c81e;border:2px solid #3a3cb0;box-shadow:0 0 0 0.6px rgba(58,60,176,0.55)"></div>
<div class="t" style="left:632.00px;top:246.70px;font-size:6.92px;line-height:14px;color:#444;">Внешние компоненты</div>
<div class="t" style="left:632.00px;top:262.23px;font-size:6.92px;line-height:14px;color:#444;">Годовые графики амортизации ОС</div>
<div class="t" style="left:632.00px;top:277.76px;font-size:6.92px;line-height:14px;color:#444;">Гостиницы</div>
<div class="t" style="left:632.00px;top:293.29px;font-size:6.92px;line-height:14px;color:#444;">Государственные контракты из ЕИС в сфере закупок</div>
<div class="t" style="left:632.00px;top:308.82px;font-size:6.92px;line-height:14px;color:#444;">Графики работы</div>
<div class="t" style="left:632.00px;top:324.35px;font-size:6.92px;line-height:14px;color:#444;">Группы доступа</div>
<div class="t" style="left:632.00px;top:339.88px;font-size:6.92px;line-height:14px;color:#444;">Группы типов операций</div>
<div class="t" style="left:632.00px;top:355.41px;font-size:6.92px;line-height:14px;color:#444;">Данные сервисов обмена с банками</div>
<div class="t" style="left:632.00px;top:370.94px;font-size:6.92px;line-height:14px;color:#444;">Доверенности налогоплательщика</div>
<div class="t" style="left:632.00px;top:386.47px;font-size:6.92px;line-height:14px;color:#444;">Договоры</div>
<div class="t" style="left:632.00px;top:402.00px;font-size:6.92px;line-height:14px;color:#444;">Документообороты обмена с банками</div>
<div class="t" style="left:632.00px;top:417.53px;font-size:6.92px;line-height:14px;color:#444;">Документы реализации полномочий налоговых органов</div>
<div class="t" style="left:632.00px;top:433.06px;font-size:6.92px;line-height:14px;color:#444;">Документы, подтверждающие льготы по имущественным налогам</div>
<div class="t" style="left:632.00px;top:448.59px;font-size:6.92px;line-height:14px;color:#444;">Должности</div>
<div class="t" style="left:632.00px;top:464.12px;font-size:6.92px;line-height:14px;color:#444;">Доп. сведения для исчисления стажа</div>
<div class="t" style="left:632.00px;top:479.65px;font-size:6.92px;line-height:14px;color:#444;">Дополнительные значения</div>
<div class="t" style="left:632.00px;top:495.18px;font-size:6.92px;line-height:14px;color:#444;">Дополнительные значения (иерархия)</div>
<div class="t" style="left:632.00px;top:510.71px;font-size:6.92px;line-height:14px;color:#444;">Дополнительные условия</div>
<div class="t" style="left:632.00px;top:526.24px;font-size:6.92px;line-height:14px;color:#444;">Доходы будущих периодов</div>
<div class="t" style="left:632.00px;top:541.77px;font-size:6.92px;line-height:14px;color:#444;">Драйверы оборудования</div>
<svg style="left:870.6px;top:250.8px" width="3" height="2" viewBox="0 0 3 2"><path d="M0 1.8H3L1.5 0Z" fill="#444"/></svg>
<div class="a" style="left:870.30px;top:258.40px;width:3.80px;height:282.60px;background:#d9d9d9;border-radius:2px"></div>
<div class="a" style="left:870.30px;top:276.90px;width:3.80px;height:8.30px;background:#9a9a9a;border-radius:2px"></div>
<svg style="left:870.6px;top:546.4px" width="3" height="2" viewBox="0 0 3 2"><path d="M0 0H3L1.5 1.8Z" fill="#444"/></svg>
<svg style="left:866px;top:400.8px" width="8" height="8.5" viewBox="0 0 8 8.5"><path d="M0.5 0.5 V7 L2.3 5.3 L3.6 8 L4.8 7.5 L3.6 4.9 L6.3 4.6 L2.6 0.9" stroke="#444" stroke-width="0.7" fill="#fff" stroke-linejoin="round"/></svg>
<div class="a" style="left:0.00px;top:550.60px;width:1024.00px;height:2.40px;background:#bcbcbc"></div>
<div class="a" style="left:1021.50px;top:0.00px;width:2.50px;height:553.00px;background:#bcbcbc"></div>
</body></html>
